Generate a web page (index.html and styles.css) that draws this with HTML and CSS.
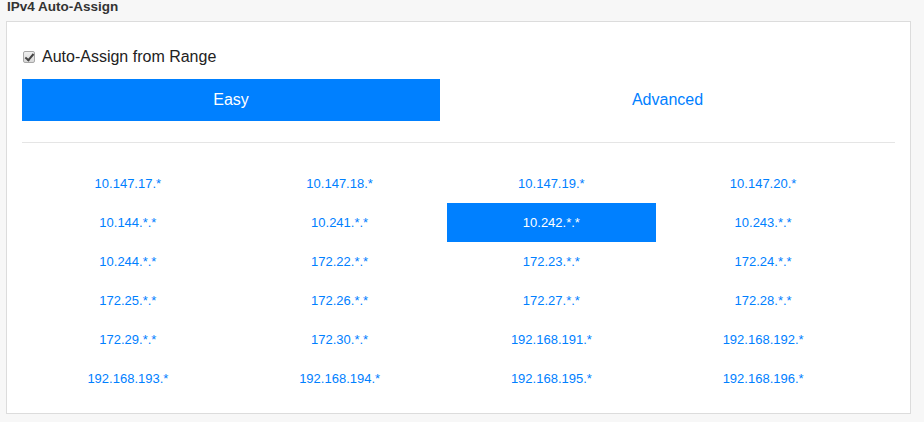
FILE: index.html
```html
<!DOCTYPE html>
<html lang="en">
<head>
    <meta charset="UTF-8">
    <title>IPv4 Auto-Assign</title>
    <link rel="stylesheet" href="styles.css">
</head>
<body>
    <div class="section">
        <h4 class="section-title">IPv4 Auto-Assign</h4>
        <div class="panel">
            <label class="auto-assign">
                <input type="checkbox" class="check" checked>
                <span>Auto-Assign from Range</span>
            </label>

            <div class="tabs">
                <div class="tab active">Easy</div>
                <div class="tab">Advanced</div>
            </div>

            <hr class="divider">

            <div class="range-grid">
                <div class="range">10.147.17.*</div>
                <div class="range">10.147.18.*</div>
                <div class="range">10.147.19.*</div>
                <div class="range">10.147.20.*</div>
                <div class="range">10.144.*.*</div>
                <div class="range">10.241.*.*</div>
                <div class="range selected">10.242.*.*</div>
                <div class="range">10.243.*.*</div>
                <div class="range">10.244.*.*</div>
                <div class="range">172.22.*.*</div>
                <div class="range">172.23.*.*</div>
                <div class="range">172.24.*.*</div>
                <div class="range">172.25.*.*</div>
                <div class="range">172.26.*.*</div>
                <div class="range">172.27.*.*</div>
                <div class="range">172.28.*.*</div>
                <div class="range">172.29.*.*</div>
                <div class="range">172.30.*.*</div>
                <div class="range">192.168.191.*</div>
                <div class="range">192.168.192.*</div>
                <div class="range">192.168.193.*</div>
                <div class="range">192.168.194.*</div>
                <div class="range">192.168.195.*</div>
                <div class="range">192.168.196.*</div>
            </div>
        </div>
    </div>
</body>
</html>
```

FILE: styles.css
```css
* {
    box-sizing: border-box;
}

body {
    margin: 0;
    background: #f7f7f7;
    font-family: 'Liberation Sans', Arial, sans-serif;
    color: #333;
}

.section {
    width: 905px;
    margin-left: 6px;
}

.section-title {
    margin: 0 0 0 1px;
    font-size: 13.5px;
    line-height: 14px;
    font-weight: bold;
    color: #333;
}

.panel {
    margin-top: 7px;
    background: #fff;
    border: 1px solid #dcdcdc;
    padding: 25px 15px 15px 15px;
}

.auto-assign {
    display: flex;
    align-items: center;
    height: 20px;
    font-size: 16px;
    line-height: 20px;
    color: #222;
}

.check {
    appearance: none;
    -webkit-appearance: none;
    width: 12px;
    height: 12px;
    margin: 0 7px 0 1px;
    border: 1px solid #a8a8a8;
    border-radius: 2px;
    background: linear-gradient(#f0f0f0, #d8d8d8);
    position: relative;
}

.check:checked::after {
    content: '';
    position: absolute;
    left: 3px;
    top: 0px;
    width: 3px;
    height: 7px;
    border: solid #444;
    border-width: 0 2px 2px 0;
    transform: rotate(40deg);
}

.tabs {
    display: flex;
    margin-top: 12px;
    height: 42px;
}

.tab {
    flex: 1;
    display: flex;
    align-items: center;
    justify-content: center;
    font-size: 16px;
    color: #0080ff;
}

.tab.active {
    flex: 0 0 418px;
    background: #0080ff;
    color: #fff;
}

.divider {
    margin: 21px 0 21px 0;
    border: none;
    border-top: 1px solid #e5e5e5;
}

.range-grid {
    display: grid;
    grid-template-columns: repeat(4, 211.75px);
}

.range {
    margin: 0 1px;
    height: 39px;
    line-height: 39px;
    text-align: center;
    font-size: 13px;
    color: #0080ff;
}

.range.selected {
    background: #0080ff;
    color: #fff;
}
```
